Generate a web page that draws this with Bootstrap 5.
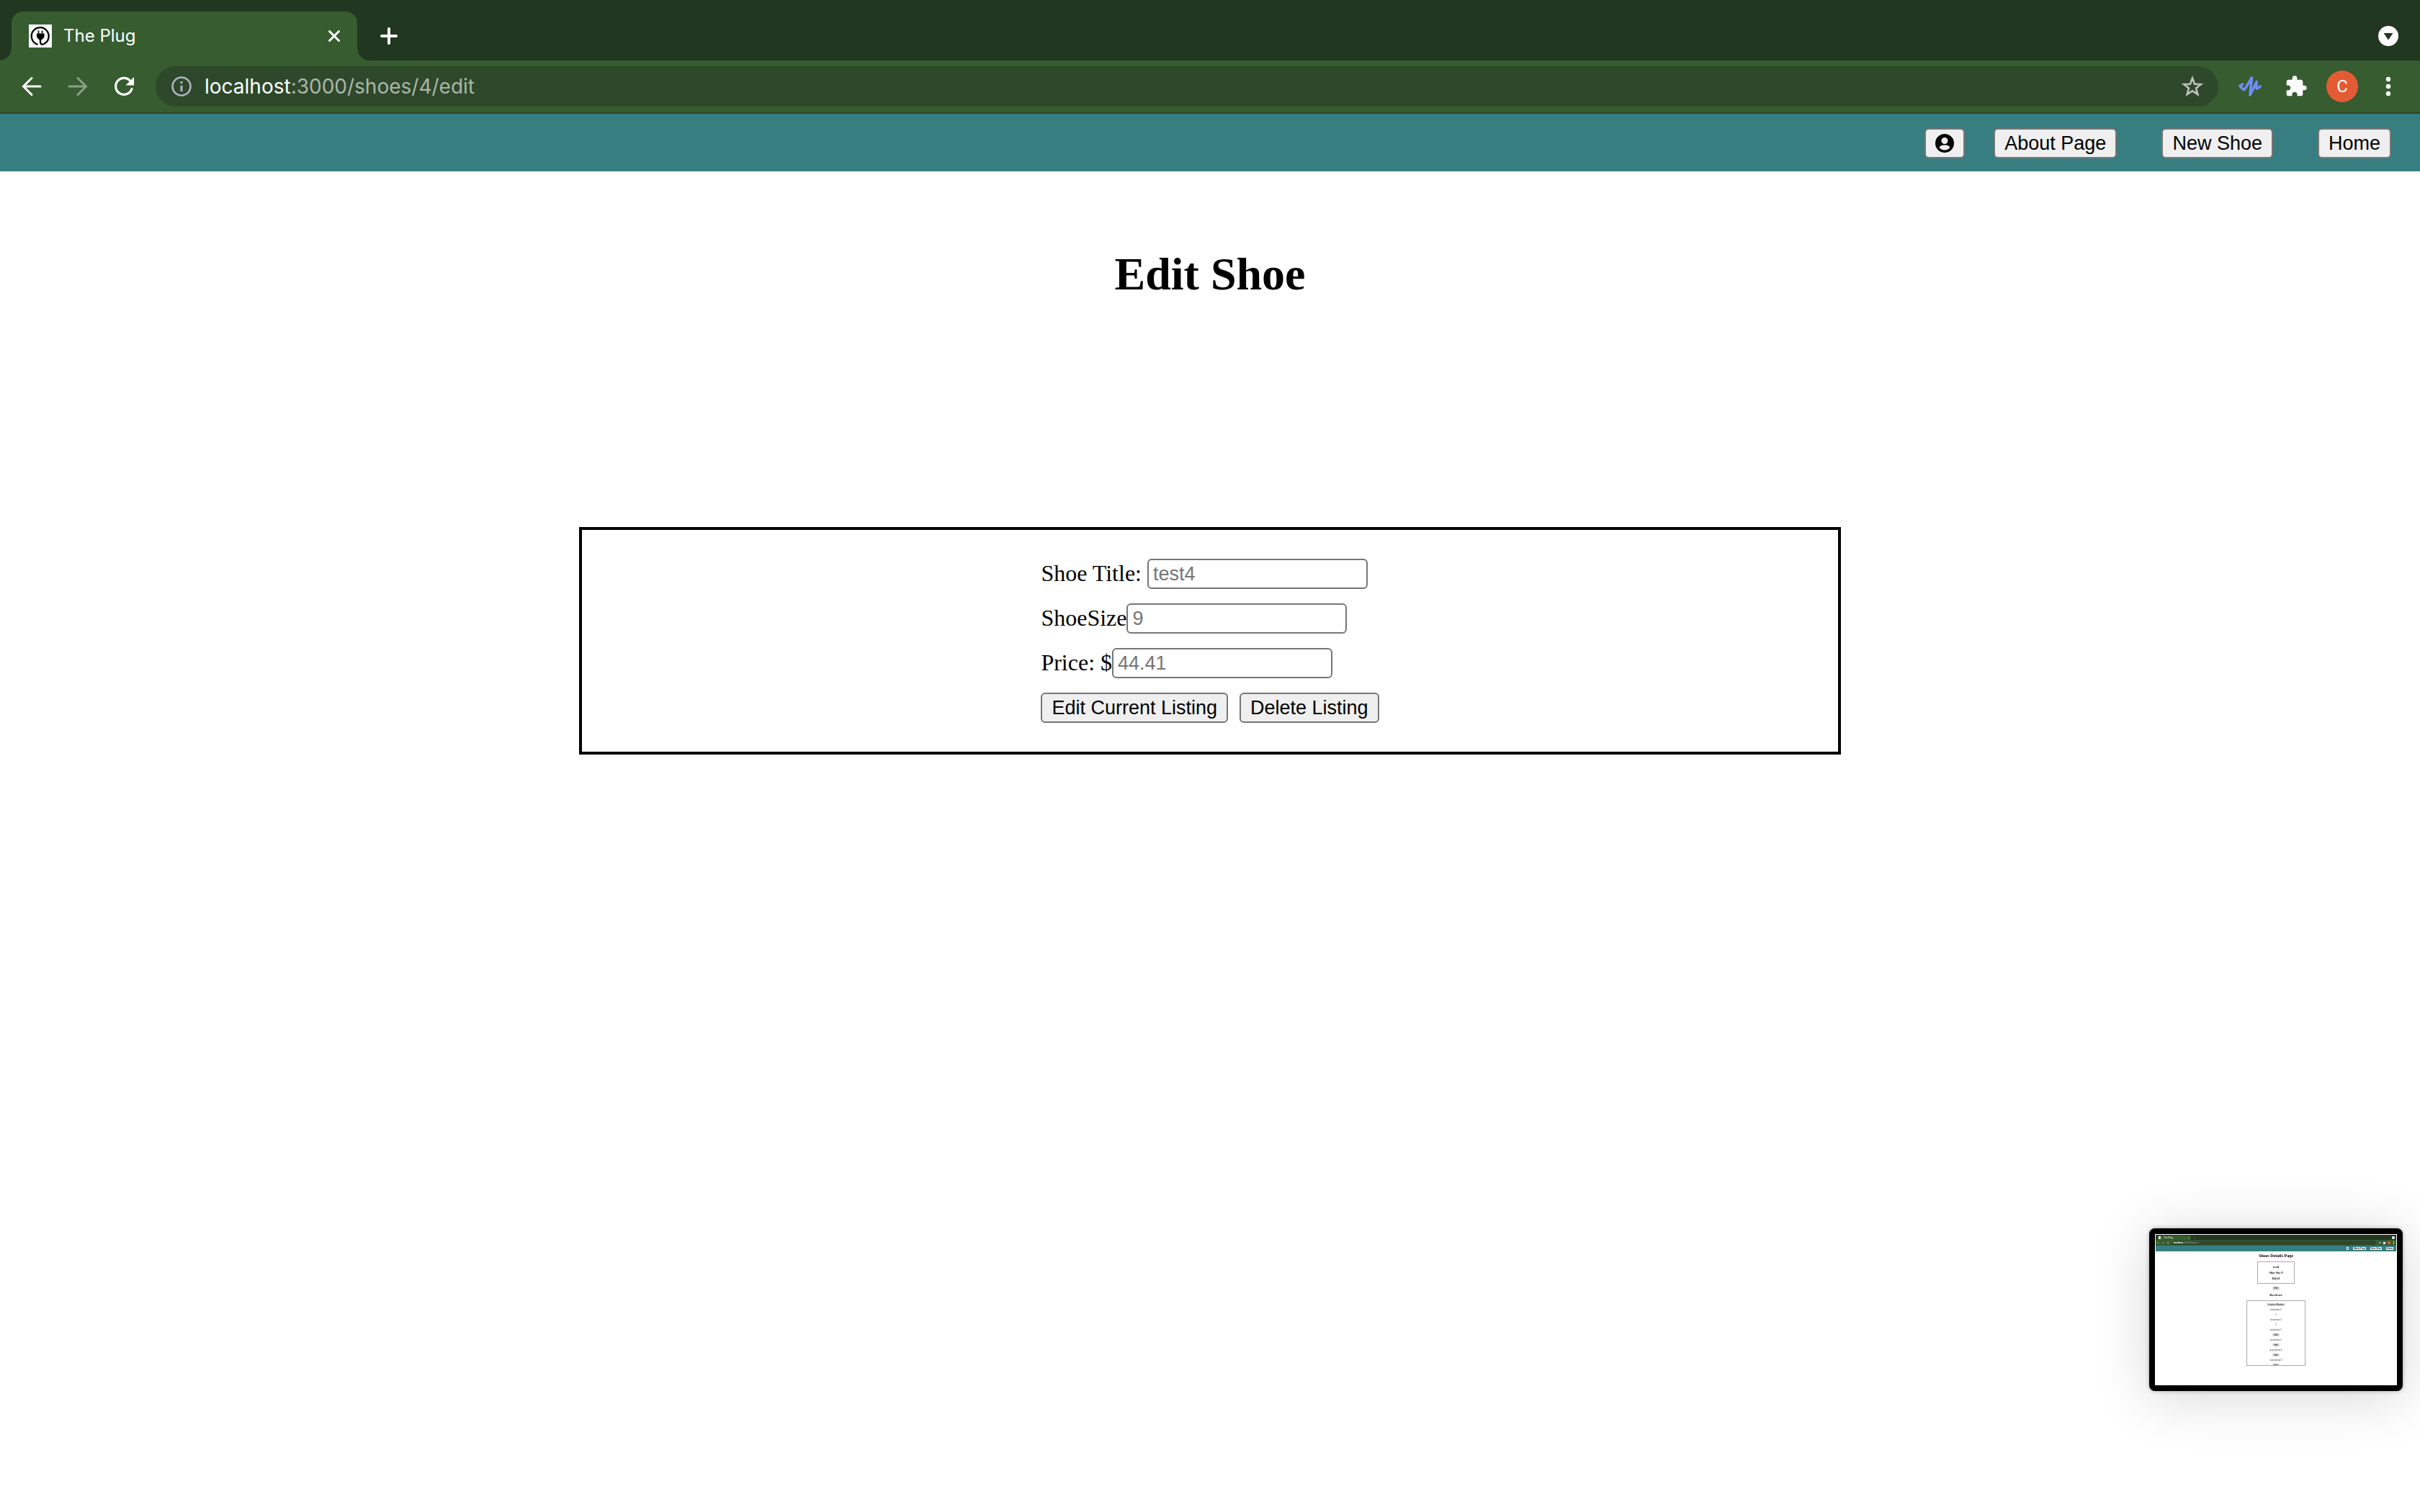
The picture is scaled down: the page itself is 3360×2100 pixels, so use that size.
<!DOCTYPE html>
<html lang="en">
<head>
<meta charset="utf-8">
<meta name="viewport" content="width=device-width, initial-scale=1">
<title>The Plug</title>
<link href="https://cdn.jsdelivr.net/npm/bootstrap@5.3.0/dist/css/bootstrap.min.css" rel="stylesheet">
<style>
  body { background: #fff; color: #000; font-family: "Liberation Serif", serif; font-size: 32px; line-height: 42px; }
  svg { display: block; flex: none; }

  /* browser frame */
  .tabstrip { background: #21371f; height: 84px; padding: 16px 30px 0 16px; font-family: Inter, sans-serif; }
  .tab-item { position: relative; width: 480px; height: 68px; padding: 0 20px 0 24px; background: #365c30; border-radius: 16px 16px 0 0; color: #fff; font-size: 24px; line-height: 32px; }
  .tab-item::before, .tab-item::after { content: ""; position: absolute; bottom: 0; width: 16px; height: 16px; }
  .tab-item::before { left: -16px; background: radial-gradient(circle at 0 0, transparent 15px, #365c30 16px); }
  .tab-item::after { right: -16px; background: radial-gradient(circle at 100% 0, transparent 15px, #365c30 16px); }
  .tab-title { margin-left: 16px; }
  .glyph-btn { display: block; padding: 0; border: 0; background: none; flex: none; }
  .new-tab { margin-left: 28px; }
  .toolbar-row { background: #365c30; height: 74px; padding: 8px 28px 8px 28px; border-bottom: 2px solid #2a4227; font-family: Inter, sans-serif; }
  .nav-glyphs { gap: 32px; margin-right: 28px; }
  .omnibox { height: 56px; border-radius: 28px; background: #2e482b; padding: 0 20px 0 20px; color: #fff; font-size: 28px; line-height: 40px; margin-right: 28px; }
  .omnibox a { color: #abb6aa; text-decoration: none; margin-left: 16px; }
  .omnibox b { color: #fff; font-weight: 400; }
  .avatar-btn { width: 44px; height: 44px; border-radius: 50%; background: #e45b33; color: #fff; font-family: Roboto, sans-serif; font-size: 24px; line-height: 44px; margin: 0 26px; text-align: center; }

  /* page */
  .site-nav { background: #377e81; height: 80px; padding: 2px 40px 0; }
  .plain-btn, .plain-input { height: 42px; border: 2px solid #767676; border-radius: 6px; font-family: "Liberation Sans", sans-serif; font-size: 27px; line-height: 36px; }
  .plain-btn { background: #efefef; color: #000; padding: 0 13px; }
  .plain-input { width: 306px; padding: 0 6px; background: #fff; }
  .plain-input::placeholder { color: #757575; opacity: 1; }
  .about-btn { margin-left: 40px; }
  .wide-gap { margin-left: 62px; }
  .page-title { font-size: 64px; line-height: 74px; font-weight: 700; margin: 106px 0 314px; }
  .listing-box { width: 52.15%; border: 4px solid #000; padding: 40px; }
  .listing-form { gap: 20px; }
  .listing-form label { padding-bottom: 2px; line-height: 40px; }

  /* floating screenshot preview */
  .shot { position: fixed; right: 24px; bottom: 168px; width: 352px; height: 226px; border: 8px solid #000; border-radius: 8px; background: #fff; padding: 1px; box-shadow: 0 0 6px rgba(0,0,0,.3), 0 8px 80px rgba(0,0,0,.16); overflow: hidden; font-size: 4px; line-height: 7px; text-align: center; }
  .shot-tabs { height: 7px; background: #21371f; padding: 1px 2px 0 2px; color: #fff; font-family: Inter, sans-serif; font-size: 3px; line-height: 6px; }
  .shot-tab { width: 47px; height: 6px; background: #365c30; padding: 0 2px; border-radius: 1px 1px 0 0; }
  .shot-bar { height: 8px; background: #365c30; padding: 1px 2px; color: #fff; font-family: Inter, sans-serif; font-size: 3px; line-height: 6px; gap: 4px; }
  .shot-omni { background: #2e482b; border-radius: 3px; height: 6px; padding: 0 2px; color: #abb6aa; }
  .shot-nav { height: 8px; background: #377e81; padding: 0 4px; gap: 6px; font-family: "Liberation Sans", sans-serif; font-size: 3px; }
  .shot-chip { background: #eee; color: #000; line-height: 4px; padding: 0 1px; }
  .shot-head { font-size: 6px; font-weight: 700; line-height: 8px; margin: 2px 0 4px; }
  .shot-card { width: 52px; height: 31px; border: 1px solid #aaa; padding-top: 3px; font-size: 4px; font-weight: 700; line-height: 8px; }
  .shot-grey { background: #ddd; font-family: "Liberation Sans", sans-serif; font-size: 3px; line-height: 5px; padding: 0 2px; }
  .shot-sub { font-size: 5px; font-weight: 700; line-height: 8px; margin: 3px 0; }
  .shot-list { width: 82px; height: 91px; border: 1px solid #aaa; padding-top: 2px; overflow: hidden; }
  .shot-line { height: 7px; flex: none; font-size: 3px; }
</style>
<script src="https://cdn.jsdelivr.net/npm/bootstrap@5.3.0/dist/js/bootstrap.bundle.min.js"></script>
</head>
<body>
<header>
  <div class="tabstrip d-flex align-items-start">
    <div class="tab-item d-flex align-items-center">
      <svg width="32" height="32" viewBox="0 0 32 32"><path fill="#fafafa" d="M0 0h32v32H0z"/><path d="M12.500 27.800A12 12 0 1 1 21 27C17.500 28.500 16 27 16 24V19" fill="none" stroke="#000" stroke-width="2.300"/><path d="M11 12.500h10.500v5l-3 3.500h-4.500l-3-3.500z"/><path d="M13.500 8.500v4m5-4v4" stroke="#000" stroke-width="1.600"/></svg>
      <span class="tab-title flex-grow-1">The Plug</span>
      <button type="button" class="glyph-btn" aria-label="Close tab"><svg width="24" height="24" viewBox="0 0 24 24" fill="none" stroke="#fff" stroke-width="3" stroke-linecap="round"><path d="M5.500 5.500l13 13m0-13l-13 13"/></svg></button>
    </div>
    <div class="d-flex align-items-center justify-content-between flex-grow-1 h-100">
      <button type="button" class="glyph-btn new-tab" aria-label="New tab"><svg width="32" height="32" viewBox="0 0 32 32" fill="none" stroke="#fff" stroke-width="4" stroke-linecap="round"><path d="M16 6v20M6 16h20"/></svg></button>
      <button type="button" class="glyph-btn" aria-label="Search tabs"><svg width="28" height="28" viewBox="0 0 28 28"><circle cx="14" cy="14" r="14" fill="#fff"/><path fill="#21371f" d="M7.500 10h13L14 19.500z"/></svg></button>
    </div>
  </div>
  <div class="toolbar-row d-flex align-items-center">
    <div class="nav-glyphs d-flex">
      <button type="button" class="glyph-btn" aria-label="Back"><svg width="32" height="32" viewBox="0 0 32 32" fill="none" stroke="#fff" stroke-width="3" stroke-linecap="round"><path d="M28 16H5M16 4.500L4.500 16 16 27.500"/></svg></button>
      <button type="button" class="glyph-btn" aria-label="Forward"><svg width="32" height="32" viewBox="0 0 32 32" fill="none" stroke="#8b9f87" stroke-width="3" stroke-linecap="round"><path d="M4 16h23M16 4.500L27.500 16 16 27.500"/></svg></button>
      <button type="button" class="glyph-btn" aria-label="Reload"><svg width="32" height="32" viewBox="0 0 32 32"><path d="M27 19.500A11.500 11.500 0 1 1 25 8.500" fill="none" stroke="#fff" stroke-width="3.200" stroke-linecap="round"/><path fill="#fff" d="M30 3v11.500H18.500z"/></svg></button>
    </div>
    <div class="omnibox d-flex align-items-center flex-grow-1">
      <svg width="32" height="32" viewBox="0 0 32 32"><circle cx="16" cy="16" r="12.500" fill="none" stroke="#b3b5c2" stroke-width="2.600"/><path d="M16 9v3m0 2.800V23" stroke="#b3b5c2" stroke-width="3"/></svg>
      <a href="#" class="flex-grow-1"><b>localhost</b>:3000/shoes/4/edit</a>
      <button type="button" class="glyph-btn" aria-label="Bookmark this tab"><svg width="32" height="32" viewBox="0 0 32 32" fill="none" stroke="#c0c0c0" stroke-width="2.600"><path d="M16 4.500l3.100 8.200 8.700.4-6.800 5.400 2.300 8.500L16 22.200 8.700 27l2.300-8.500-6.800-5.400 8.700-.4z"/></svg></button>
    </div>
    <button type="button" class="glyph-btn" aria-label="Voice extension"><svg width="32" height="32" viewBox="0 0 32 32" fill="none" stroke="#6f8df8" stroke-width="3.600" stroke-linecap="round" stroke-linejoin="round"><path d="M2 15.500l3.500-2.500M2 15.500l4.500 4.500c1 .8 2 .5 2.600-.6L18.500 4 16 28l9.200-18.500-.6 7.500c0 2.500 1.200 2.300 2.400 1.400l3.200-2.600"/></svg></button>
    <button type="button" class="glyph-btn ms-4 ps-2" aria-label="Extensions"><svg width="32" height="32" viewBox="0 0 24 24" fill="#fff"><path d="M20.500 11H19V7c0-1.100-.9-2-2-2h-4V3.500a2.500 2.500 0 0 0-5 0V5H4c-1.100 0-2 .9-2 2v3.800h1.500c1.500 0 2.700 1.200 2.700 2.700S5 16.200 3.500 16.200H2V20c0 1.100.9 2 2 2h3.800v-1.500c0-1.500 1.200-2.700 2.700-2.700s2.700 1.200 2.700 2.700V22H17c1.100 0 2-.9 2-2v-4h1.500a2.500 2.500 0 0 0 0-5z"/></svg></button>
    <button type="button" class="glyph-btn avatar-btn" aria-label="Profile">C</button>
    <button type="button" class="glyph-btn" aria-label="Menu"><svg width="32" height="32" viewBox="0 0 32 32" fill="#fff"><circle cx="16" cy="6" r="3.200"/><circle cx="16" cy="16" r="3.200"/><circle cx="16" cy="26" r="3.200"/></svg></button>
  </div>
</header>

<nav class="site-nav d-flex align-items-center justify-content-end">
  <button type="button" class="plain-btn" aria-label="Account"><svg width="26" height="26" viewBox="0 0 26 26"><circle cx="13" cy="13" r="13"/><circle cx="13" cy="9.500" r="4.500" fill="#efefef"/><path fill="#efefef" d="M5.500 18.500c1.500-2.500 4.500-3 7.500-3s6 .5 7.500 3c-1.500 2.500-4.500 4-7.500 4s-6-1.500-7.500-4z"/></svg></button>
  <button type="button" class="plain-btn about-btn">About Page</button>
  <button type="button" class="plain-btn wide-gap">New Shoe</button>
  <button type="button" class="plain-btn wide-gap">Home</button>
</nav>

<main class="d-flex flex-column align-items-center">
  <h1 class="page-title">Edit Shoe</h1>
  <section class="listing-box d-flex justify-content-center">
    <form class="listing-form d-flex flex-column">
      <div class="d-flex align-items-center"><label for="shoe-title">Shoe Title:&nbsp;</label><input id="shoe-title" class="plain-input" type="text" placeholder="test4"></div>
      <div class="d-flex align-items-center"><label for="shoe-size">ShoeSize</label><input id="shoe-size" class="plain-input" type="text" placeholder="9"></div>
      <div class="d-flex align-items-center"><label for="shoe-price">Price: $</label><input id="shoe-price" class="plain-input" type="text" placeholder="44.41"></div>
      <div class="d-flex gap-3"><button type="button" class="plain-btn">Edit Current Listing</button><button type="button" class="plain-btn">Delete Listing</button></div>
    </form>
  </section>
</main>

<aside class="shot" aria-label="Screenshot preview">
  <div class="shot-tabs d-flex">
    <div class="shot-tab d-flex align-items-center"><svg width="3" height="4" viewBox="0 0 3 4"><path fill="#ddd" d="M0 0h3v4H0z"/></svg><span class="flex-grow-1 text-start ps-1">The Plug</span><span>×</span></div>
    <span class="flex-grow-1 text-start ps-1">+</span>
    <svg width="4" height="5" viewBox="0 0 4 5"><circle cx="2" cy="3" r="2" fill="#fff"/></svg>
  </div>
  <div class="shot-bar d-flex align-items-center">
    <span>←</span><span>→</span><span>↻</span>
    <div class="shot-omni flex-grow-1 text-start"><b class="text-white">localhost</b>:3000/shoes/4</div>
    <svg width="22" height="6" viewBox="0 0 22 6"><path d="M0 3h3" stroke="#6f8df8" stroke-width="2"/><path fill="#fff" d="M6 2h3v3H6z"/><circle cx="14" cy="3" r="2.200" fill="#e45b33"/><path d="M20.500 1v4" stroke="#fff" stroke-dasharray="1 .5"/></svg>
  </div>
  <div class="shot-nav d-flex align-items-center justify-content-end"><span class="shot-chip">●</span><span class="shot-chip">About Page</span><span class="shot-chip">New Shoe</span><span class="shot-chip">Home</span></div>
  <div class="d-flex flex-column align-items-center">
    <div class="shot-head">Shoes Details Page</div>
    <div class="shot-card"><div>test4</div><div>Shoe Size 9</div><div>$44.41</div></div>
    <div class="shot-grey mt-1">Edit</div>
    <div class="shot-sub">Reviews</div>
    <div class="shot-list d-flex flex-column align-items-center">
      <div class="shot-line"><span class="shot-grey">Leave a Review</span></div>
      <div class="shot-line">test review 2</div>
      <div class="shot-line">2</div>
      <div class="shot-line">test review 2</div>
      <div class="shot-line">2</div>
      <div class="shot-line">test review 2</div>
      <div class="shot-line"><span class="shot-grey">Edit</span></div>
      <div class="shot-line">test review 2</div>
      <div class="shot-line"><span class="shot-grey">Edit</span></div>
      <div class="shot-line">test reviews 3</div>
      <div class="shot-line"><span class="shot-grey">Edit</span></div>
      <div class="shot-line">test reviews 3</div>
      <div class="shot-line"><span class="shot-grey">Edit</span></div>
    </div>
  </div>
</aside>
</body>
</html>
